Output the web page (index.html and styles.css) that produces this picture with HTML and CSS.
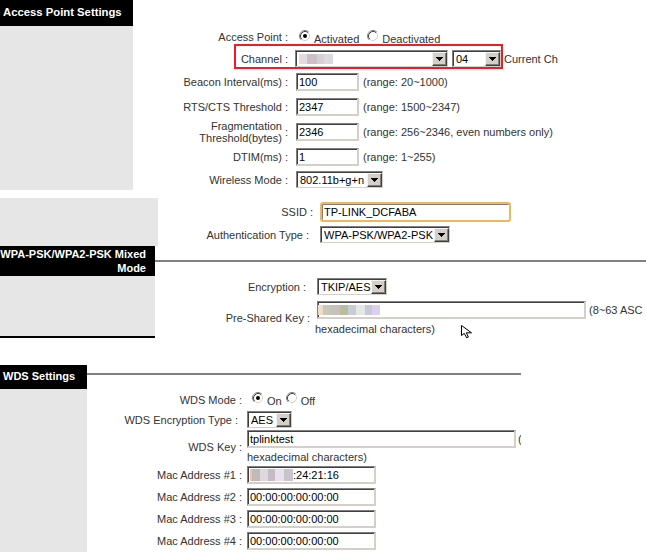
FILE: index.html
```html
<!DOCTYPE html>
<html lang="en">
<head>
<meta charset="utf-8">
<title>Wireless Settings</title>
<link rel="stylesheet" href="styles.css">
</head>
<body>
<div class="page">

  <section class="sec sec-ap">
    <div class="side side-ap">
      <div class="title title-ap">Access Point Settings</div>
      <div class="panel"></div>
    </div>
    <div class="form form-ap">
      <div class="row h20">
        <div class="lbl">Access Point :</div>
        <div class="ctl ctl-ap">
          <span class="opt"><svg class="radio" width="12" height="12" viewBox="0 0 12 12"><circle cx="6" cy="6" r="5" fill="#fff"/><path d="M2.11 9.89A5.5 5.5 0 0 1 9.89 2.11" fill="none" stroke="#808080"/><path d="M2.82 9.18A4.5 4.5 0 0 1 9.18 2.82" fill="none" stroke="#404040"/><path d="M9.89 2.11A5.5 5.5 0 0 1 2.11 9.89" fill="none" stroke="#fff"/><path d="M9.18 2.82A4.5 4.5 0 0 1 2.82 9.18" fill="none" stroke="#d4d0c8"/><circle cx="6" cy="6" r="2" fill="#000"/></svg><span class="opt-text">Activated</span></span>
          <span class="opt opt-next"><svg class="radio" width="12" height="12" viewBox="0 0 12 12"><circle cx="6" cy="6" r="5" fill="#fff"/><path d="M2.11 9.89A5.5 5.5 0 0 1 9.89 2.11" fill="none" stroke="#808080"/><path d="M2.82 9.18A4.5 4.5 0 0 1 9.18 2.82" fill="none" stroke="#404040"/><path d="M9.89 2.11A5.5 5.5 0 0 1 2.11 9.89" fill="none" stroke="#fff"/><path d="M9.18 2.82A4.5 4.5 0 0 1 2.82 9.18" fill="none" stroke="#d4d0c8"/></svg><span class="opt-text">Deactivated</span></span>
        </div>
      </div>
      <div class="row h23 row-hl">
        <div class="hl"></div>
        <div class="lbl">Channel :</div>
        <div class="ctl ctl-ap">
          <div class="sel w153 ml-1"><div class="sel-val"><span class="blur blur-chan"></span></div><div class="sel-btn"><svg width="7" height="4" viewBox="0 0 7 4"><path d="M0 0h7v1H0zM1 1h5v1H1zM2 2h3v1H2zM3 3h1v1H3z" fill="#000"/></svg></div></div>
          <div class="sel w49 ml4"><div class="sel-val">04</div><div class="sel-btn"><svg width="7" height="4" viewBox="0 0 7 4"><path d="M0 0h7v1H0zM1 1h5v1H1zM2 2h3v1H2zM3 3h1v1H3z" fill="#000"/></svg></div></div>
          <span class="note ml3">Current Ch</span>
        </div>
      </div>
      <div class="row h24">
        <div class="lbl">Beacon Interval(ms) :</div>
        <div class="ctl ctl-ap"><div class="inp w63">100</div><span class="note ml4">(range: 20~1000)</span></div>
      </div>
      <div class="row h25">
        <div class="lbl">RTS/CTS Threshold :</div>
        <div class="ctl ctl-ap"><div class="inp w63">2347</div><span class="note ml4">(range: 1500~2347)</span></div>
      </div>
      <div class="row h25">
        <div class="lbl lbl-multi"><span class="ml-text">Fragmentation<br>Threshold(bytes)</span><span class="colon">&nbsp;:</span></div>
        <div class="ctl ctl-ap"><div class="inp w63">2346</div><span class="note ml4">(range: 256~2346, even numbers only)</span></div>
      </div>
      <div class="row h25">
        <div class="lbl">DTIM(ms) :</div>
        <div class="ctl ctl-ap"><div class="inp w63">1</div><span class="note ml4">(range: 1~255)</span></div>
      </div>
      <div class="row h21">
        <div class="lbl">Wireless Mode :</div>
        <div class="ctl ctl-ap">
          <div class="sel w87"><div class="sel-val">802.11b+g+n</div><div class="sel-btn"><svg width="7" height="4" viewBox="0 0 7 4"><path d="M0 0h7v1H0zM1 1h5v1H1zM2 2h3v1H2zM3 3h1v1H3z" fill="#000"/></svg></div></div>
        </div>
      </div>
    </div>
  </section>

  <section class="sec sec-ssid">
    <div class="side side-ssid">
      <div class="panel"></div>
    </div>
    <div class="form form-ssid">
      <div class="row h23">
        <div class="lbl">SSID :</div>
        <div class="ctl ctl-b"><div class="inp inp-focus w191">TP-LINK_DCFABA</div></div>
      </div>
      <div class="row h23">
        <div class="lbl lbl-s">Authentication Type :</div>
        <div class="ctl ctl-b">
          <div class="sel w130"><div class="sel-val">WPA-PSK/WPA2-PSK</div><div class="sel-btn"><svg width="7" height="4" viewBox="0 0 7 4"><path d="M0 0h7v1H0zM1 1h5v1H1zM2 2h3v1H2zM3 3h1v1H3z" fill="#000"/></svg></div></div>
        </div>
      </div>
    </div>
  </section>

  <section class="sec sec-head sec-head-wpa">
    <div class="title title-wpa">WPA-PSK/WPA2-PSK Mixed<br>Mode</div>
    <div class="rule rule-wpa"></div>
  </section>

  <section class="sec sec-wpa">
    <div class="side side-wpa">
      <div class="panel panel-wpa"></div>
    </div>
    <div class="form">
      <div class="row h21">
        <div class="lbl lbl-s">Encryption :</div>
        <div class="ctl ctl-c">
          <div class="sel w70"><div class="sel-val">TKIP/AES</div><div class="sel-btn"><svg width="7" height="4" viewBox="0 0 7 4"><path d="M0 0h7v1H0zM1 1h5v1H1zM2 2h3v1H2zM3 3h1v1H3z" fill="#000"/></svg></div></div>
        </div>
      </div>
      <div class="row h41">
        <div class="lbl">Pre-Shared Key :</div>
        <div class="ctl ctl-c ctl-col">
          <div class="line line-psk"><div class="inp w269"><span class="blur blur-psk"></span></div><span class="note ml3">(8~63 ASC</span></div>
          <div class="hex hex-psk">hexadecimal characters)</div>
        </div>
      </div>
    </div>
  </section>

  <section class="sec sec-head sec-head-wds">
    <div class="title title-wds">WDS Settings</div>
    <div class="rule rule-wds"></div>
  </section>

  <section class="sec sec-wds">
    <div class="side side-wds">
      <div class="panel"></div>
    </div>
    <div class="form form-wds">
      <div class="row h21">
        <div class="lbl">WDS Mode :</div>
        <div class="ctl ctl-d">
          <span class="opt opt-first-d"><svg class="radio" width="12" height="12" viewBox="0 0 12 12"><circle cx="6" cy="6" r="5" fill="#fff"/><path d="M2.11 9.89A5.5 5.5 0 0 1 9.89 2.11" fill="none" stroke="#808080"/><path d="M2.82 9.18A4.5 4.5 0 0 1 9.18 2.82" fill="none" stroke="#404040"/><path d="M9.89 2.11A5.5 5.5 0 0 1 2.11 9.89" fill="none" stroke="#fff"/><path d="M9.18 2.82A4.5 4.5 0 0 1 2.82 9.18" fill="none" stroke="#d4d0c8"/><circle cx="6" cy="6" r="2" fill="#000"/></svg><span class="opt-text">On</span></span>
          <span class="opt opt-next-d"><svg class="radio" width="12" height="12" viewBox="0 0 12 12"><circle cx="6" cy="6" r="5" fill="#fff"/><path d="M2.11 9.89A5.5 5.5 0 0 1 9.89 2.11" fill="none" stroke="#808080"/><path d="M2.82 9.18A4.5 4.5 0 0 1 9.18 2.82" fill="none" stroke="#404040"/><path d="M9.89 2.11A5.5 5.5 0 0 1 2.11 9.89" fill="none" stroke="#fff"/><path d="M9.18 2.82A4.5 4.5 0 0 1 2.82 9.18" fill="none" stroke="#d4d0c8"/></svg><span class="opt-text">Off</span></span>
        </div>
      </div>
      <div class="row h19">
        <div class="lbl lbl-s">WDS Encryption Type :</div>
        <div class="ctl ctl-d">
          <div class="sel w45"><div class="sel-val">AES</div><div class="sel-btn"><svg width="7" height="4" viewBox="0 0 7 4"><path d="M0 0h7v1H0zM1 1h5v1H1zM2 2h3v1H2zM3 3h1v1H3z" fill="#000"/></svg></div></div>
        </div>
      </div>
      <div class="row h35">
        <div class="lbl">WDS Key :</div>
        <div class="ctl ctl-d ctl-col">
          <div class="line line-key"><div class="inp w269">tplinktest</div><span class="note ml2">(</span></div>
          <div class="hex hex-key">hexadecimal characters)</div>
        </div>
      </div>
      <div class="row h22">
        <div class="lbl">Mac Address #1 :</div>
        <div class="ctl ctl-d"><div class="inp w129"><span class="blur blur-mac"></span>:24:21:16</div></div>
      </div>
      <div class="row h22">
        <div class="lbl">Mac Address #2 :</div>
        <div class="ctl ctl-d"><div class="inp w129">00:00:00:00:00:00</div></div>
      </div>
      <div class="row h22">
        <div class="lbl">Mac Address #3 :</div>
        <div class="ctl ctl-d"><div class="inp w129">00:00:00:00:00:00</div></div>
      </div>
      <div class="row h22">
        <div class="lbl">Mac Address #4 :</div>
        <div class="ctl ctl-d"><div class="inp w129">00:00:00:00:00:00</div></div>
      </div>
    </div>
  </section>

  <svg class="cursor" width="12" height="14" viewBox="0 0 12 14"><path d="M0.5 0.5V10.5L3.3 8.4L5.6 12.8L7.4 12L5.3 7.8H10.5Z" fill="#fff" stroke="#000" stroke-linejoin="miter"/></svg>
</div>
</body>
</html>
```

FILE: styles.css
```css
html, body {
  margin: 0;
  padding: 0;
  background: #fff;
  overflow: hidden;
}
body {
  font-family: "Liberation Sans", Arial, sans-serif;
  font-size: 11px;
  line-height: 14px;
  color: #333;
}
.page {
  position: relative;
  width: 646px;
  height: 552px;
  overflow: hidden;
}

/* sections */
.sec { display: flex; }
.sec-ap { height: 190px; }
.sec-ssid { height: 48px; margin-top: 8px; }
.sec-head-wpa { height: 30px; }
.sec-wpa { height: 62px; }
.sec-head-wds { height: 24px; margin-top: 27px; width: 521px; }
.sec-wds { height: 163px; width: 521px; }

.side { display: flex; flex-direction: column; flex: none; }
.side-ap { width: 133px; }
.side-ssid { width: 158px; }
.side-wpa { width: 155px; }
.side-wds { width: 87px; }

.panel { flex: 1; background: #e6e6e6; }
.panel-wpa { border-bottom: 2px solid #000; }

.title {
  flex: none;
  background: #000;
  color: #fff;
  font-weight: bold;
  font-size: 11px;
  line-height: 14px;
  white-space: nowrap;
  box-sizing: border-box;
}
.title-ap { height: 26px; padding: 5px 0 0 3px; font-size: 11.3px; }
.title-wpa { width: 155px; height: 30px; padding: 1px 9px 0 0; text-align: right; }
.title-wds { width: 87px; height: 24px; padding: 4px 0 0 3px; }

.rule { flex: 1; height: 2px; background: #808080; }
.rule-wpa { margin-top: 14px; }
.rule-wds { margin-top: 8px; }

/* forms */
.form { flex: 1; display: flex; flex-direction: column; min-width: 0; }
.form-ap { padding-top: 27px; }
.form-ssid { padding-top: 2px; }
.form-wds { overflow: hidden; }

.row { display: flex; align-items: center; flex: none; }
.row-hl { position: relative; }
.h19 { height: 19px; }
.h20 { height: 20px; }
.h21 { height: 21px; }
.h22 { height: 22px; }
.h23 { height: 23px; }
.h24 { height: 24px; }
.h25 { height: 25px; }
.h35 { height: 35px; }
.h41 { height: 41px; }

.lbl {
  width: 155px;
  flex: none;
  box-sizing: border-box;
  text-align: right;
  white-space: nowrap;
}
.lbl-s { padding-right: 4px; }
.lbl-multi {
  display: flex;
  justify-content: flex-end;
  align-items: center;
  line-height: 12px;
}
.ml-text { text-align: right; }

.ctl { display: flex; align-items: center; white-space: nowrap; }
.ctl-ap { margin-left: 8px; }
.ctl-b { margin-left: 7px; }
.ctl-c { margin-left: 7px; }
.ctl-d { margin-left: 5px; }
.ctl-col { flex-direction: column; align-items: flex-start; align-self: stretch; }

.line { display: flex; align-items: center; }
.line-psk { margin-top: 4px; }
.line-key { margin-top: 1px; }
.hex { line-height: 14px; }
.hex-psk { margin-top: 3px; margin-left: -2px; }
.hex-key { margin-top: 2px; }

.note { color: #333; }
.ml-1 { margin-left: -1px; }
.ml2 { margin-left: 2px; }
.ml3 { margin-left: 3px; }
.ml4 { margin-left: 4px; }

/* highlight annotation */
.hl {
  position: absolute;
  left: 101px;
  top: -3px;
  width: 269px;
  height: 25px;
  box-sizing: border-box;
  border: 2px solid #ee1c24;
}

/* radio options */
.opt { display: flex; align-items: flex-start; }
.radio { flex: none; margin: 1px 3px 0 3px; }
.opt-text { padding-top: 3px; }
.opt-next { margin-left: 5px; }
.opt-first-d { margin-left: 2px; }
.opt-next-d { margin-left: 1px; }

/* classic select */
.sel {
  display: flex;
  flex: none;
  height: 17px;
  box-sizing: border-box;
  border: 1px solid;
  border-color: #808080 #d4d0c8 #d4d0c8 #808080;
  box-shadow: inset 1px 1px 0 #404040;
  padding: 1px 0 0 1px;
  background: #fff;
  color: #000;
}
.sel-val {
  flex: 1;
  min-width: 0;
  display: flex;
  align-items: center;
  padding-left: 2px;
  overflow: hidden;
  line-height: 14px;
}
.sel-btn {
  flex: none;
  width: 15px;
  box-sizing: border-box;
  background: #d4d0c8;
  border: 1px solid;
  border-color: #f4f4f4 #404040 #404040 #f4f4f4;
  box-shadow: inset -1px -1px 0 #808080;
  display: flex;
  align-items: center;
  justify-content: center;
}
.sel-btn svg { display: block; }

.w45 { width: 45px; }
.w49 { width: 49px; }
.w63 { width: 63px; }
.w70 { width: 70px; }
.w87 { width: 87px; }
.w129 { width: 129px; }
.w130 { width: 130px; }
.w153 { width: 153px; }
.w191 { width: 191px; }
.w269 { width: 269px; }

/* classic text input */
.inp {
  flex: none;
  height: 18px;
  box-sizing: border-box;
  border-style: solid;
  border-width: 1px 2px 2px 1px;
  border-color: #808080 #d4d0c8 #d4d0c8 #808080;
  box-shadow: inset 1px 1px 0 #404040;
  padding: 1px 0 0 2px;
  background: #fff;
  color: #000;
  display: flex;
  align-items: center;
  white-space: nowrap;
  overflow: hidden;
  line-height: 14px;
}
.inp-focus {
  height: 20px;
  border: 2px solid #efb85e;
  border-radius: 3px;
  box-shadow: inset 1px 1px 0 #808080;
  padding: 0 0 0 2px;
}

/* pixelated (blurred) values */
.blur { display: block; flex: none; height: 10px; }
.blur-chan {
  width: 34px;
  background: linear-gradient(90deg, #e2dade 0 8px, #cdbfc6 8px 18px, #d6d0d6 18px 25px, #dcdadf 25px 34px);
}
.blur-psk {
  width: 62px;
  margin-left: -2px;
  background: linear-gradient(90deg, #f0dcc8 0 5px, #c8c8b8 5px 13px, #c8c0c0 13px 22px, #b8bca0 22px 30px, #c8ccd4 30px 38px, #e4e8e4 38px 47px, #c8c8d8 47px 54px, #dcd0ec 54px 62px);
}
.blur-mac {
  width: 43px;
  height: 12px;
  background: linear-gradient(90deg, #e8c8a8 0 2px, #c0b8bc 2px 10px, #dcd8dc 10px 18px, #c4bcc4 18px 25px, #e8e0ec 25px 34px, #c8c4cc 34px 43px);
}

.cursor {
  position: absolute;
  left: 461px;
  top: 325px;
}
```
